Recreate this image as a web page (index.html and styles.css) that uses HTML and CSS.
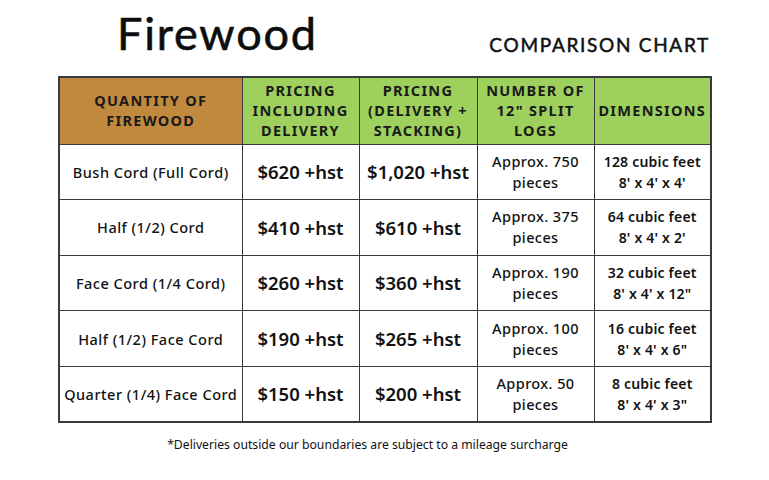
FILE: index.html
```html
<!DOCTYPE html>
<html>
<head>
<meta charset="utf-8">
<link rel="stylesheet" href="styles.css">
</head>
<body>
<div class="page">
  <header class="top">
    <h1 class="title">Firewood</h1>
    <div class="subtitle">COMPARISON CHART</div>
  </header>
  <table class="chart">
    <colgroup>
      <col class="c1"><col class="c2"><col class="c3"><col class="c4"><col class="c5">
    </colgroup>
    <thead>
      <tr>
        <th class="brown">QUANTITY OF<br>FIREWOOD</th>
        <th class="green">PRICING<br>INCLUDING<br>DELIVERY</th>
        <th class="green">PRICING<br>(DELIVERY +<br>STACKING)</th>
        <th class="green">NUMBER OF<br>12" SPLIT<br>LOGS</th>
        <th class="green">DIMENSIONS</th>
      </tr>
    </thead>
    <tbody>
      <tr>
        <td class="qty">Bush Cord (Full Cord)</td>
        <td class="price">$620 +hst</td>
        <td class="price">$1,020 +hst</td>
        <td class="logs">Approx. 750<br>pieces</td>
        <td class="dim">128 cubic feet<br>8' x 4' x 4'</td>
      </tr>
      <tr>
        <td class="qty">Half (1/2) Cord</td>
        <td class="price">$410 +hst</td>
        <td class="price">$610 +hst</td>
        <td class="logs">Approx. 375<br>pieces</td>
        <td class="dim">64 cubic feet<br>8' x 4' x 2'</td>
      </tr>
      <tr>
        <td class="qty">Face Cord (1/4 Cord)</td>
        <td class="price">$260 +hst</td>
        <td class="price">$360 +hst</td>
        <td class="logs">Approx. 190<br>pieces</td>
        <td class="dim">32 cubic feet<br>8' x 4' x 12"</td>
      </tr>
      <tr>
        <td class="qty">Half (1/2) Face Cord</td>
        <td class="price">$190 +hst</td>
        <td class="price">$265 +hst</td>
        <td class="logs">Approx. 100<br>pieces</td>
        <td class="dim">16 cubic feet<br>8' x 4' x 6"</td>
      </tr>
      <tr>
        <td class="qty">Quarter (1/4) Face Cord</td>
        <td class="price">$150 +hst</td>
        <td class="price">$200 +hst</td>
        <td class="logs">Approx. 50<br>pieces</td>
        <td class="dim">8 cubic feet<br>8' x 4' x 3"</td>
      </tr>
    </tbody>
  </table>
  <p class="note">*Deliveries outside our boundaries are subject to a mileage surcharge</p>
</div>
</body>
</html>
```

FILE: styles.css
```css
* { box-sizing: border-box; }
html, body { margin: 0; padding: 0; background: #ffffff; }
body {
  font-family: "Noto Sans", "DejaVu Sans", sans-serif;
  color: #111111;
  width: 769px;
  height: 480px;
  overflow: hidden;
}
.page {
  padding: 0 59px 0 58px;
}
.top {
  display: flex;
  justify-content: space-between;
  align-items: flex-end;
  height: 76px;
  padding-bottom: 21px;
}
.title {
  margin: 0 0 0 59px;
  font-family: "Lato", sans-serif;
  font-weight: 400;
  font-size: 45px;
  line-height: 44px;
  letter-spacing: 1.8px;
  color: #0d0d0d;
  -webkit-text-stroke: 0.6px #0d0d0d;
}
.subtitle {
  font-family: "Lato", sans-serif;
  font-weight: 400;
  font-size: 19px;
  letter-spacing: 1.7px;
  line-height: 20px;
  margin-bottom: 0;
  color: #111111;
  -webkit-text-stroke: 0.5px #111111;
}
.chart {
  width: 652px;
  border-collapse: collapse;
  table-layout: fixed;
  border: 2px solid #3a3a3a;
}
.c1 { width: 183px; }
.c2 { width: 117px; }
.c3 { width: 118px; }
.c4 { width: 117px; }
.c5 { width: 117px; }
.chart th, .chart td {
  border: 1px solid #3a3a3a;
  text-align: center;
  vertical-align: middle;
  padding: 0;
}
.chart th {
  height: 67px;
  font-size: 14.5px;
  font-weight: 700;
  letter-spacing: 1.3px;
  line-height: 20px;
  color: #1a1a1a;
  padding-bottom: 2px;
}
.brown { background: #c0893e; }
.green { background: #9dd05c; }
.chart td { height: 55.6px; color: #111111; }
.qty { font-size: 14.5px; font-weight: 500; letter-spacing: 0.5px; }
.price { font-size: 18.5px; font-weight: 600; }
.logs { font-size: 14.5px; font-weight: 500; line-height: 21px; letter-spacing: 0.4px; }
.dim { font-size: 14px; font-weight: 600; line-height: 21px; letter-spacing: 0.2px; }
.note {
  margin: 13px 33px 0 0;
  text-align: center;
  font-size: 12.2px;
  font-weight: 400;
  color: #111111;
}
```
